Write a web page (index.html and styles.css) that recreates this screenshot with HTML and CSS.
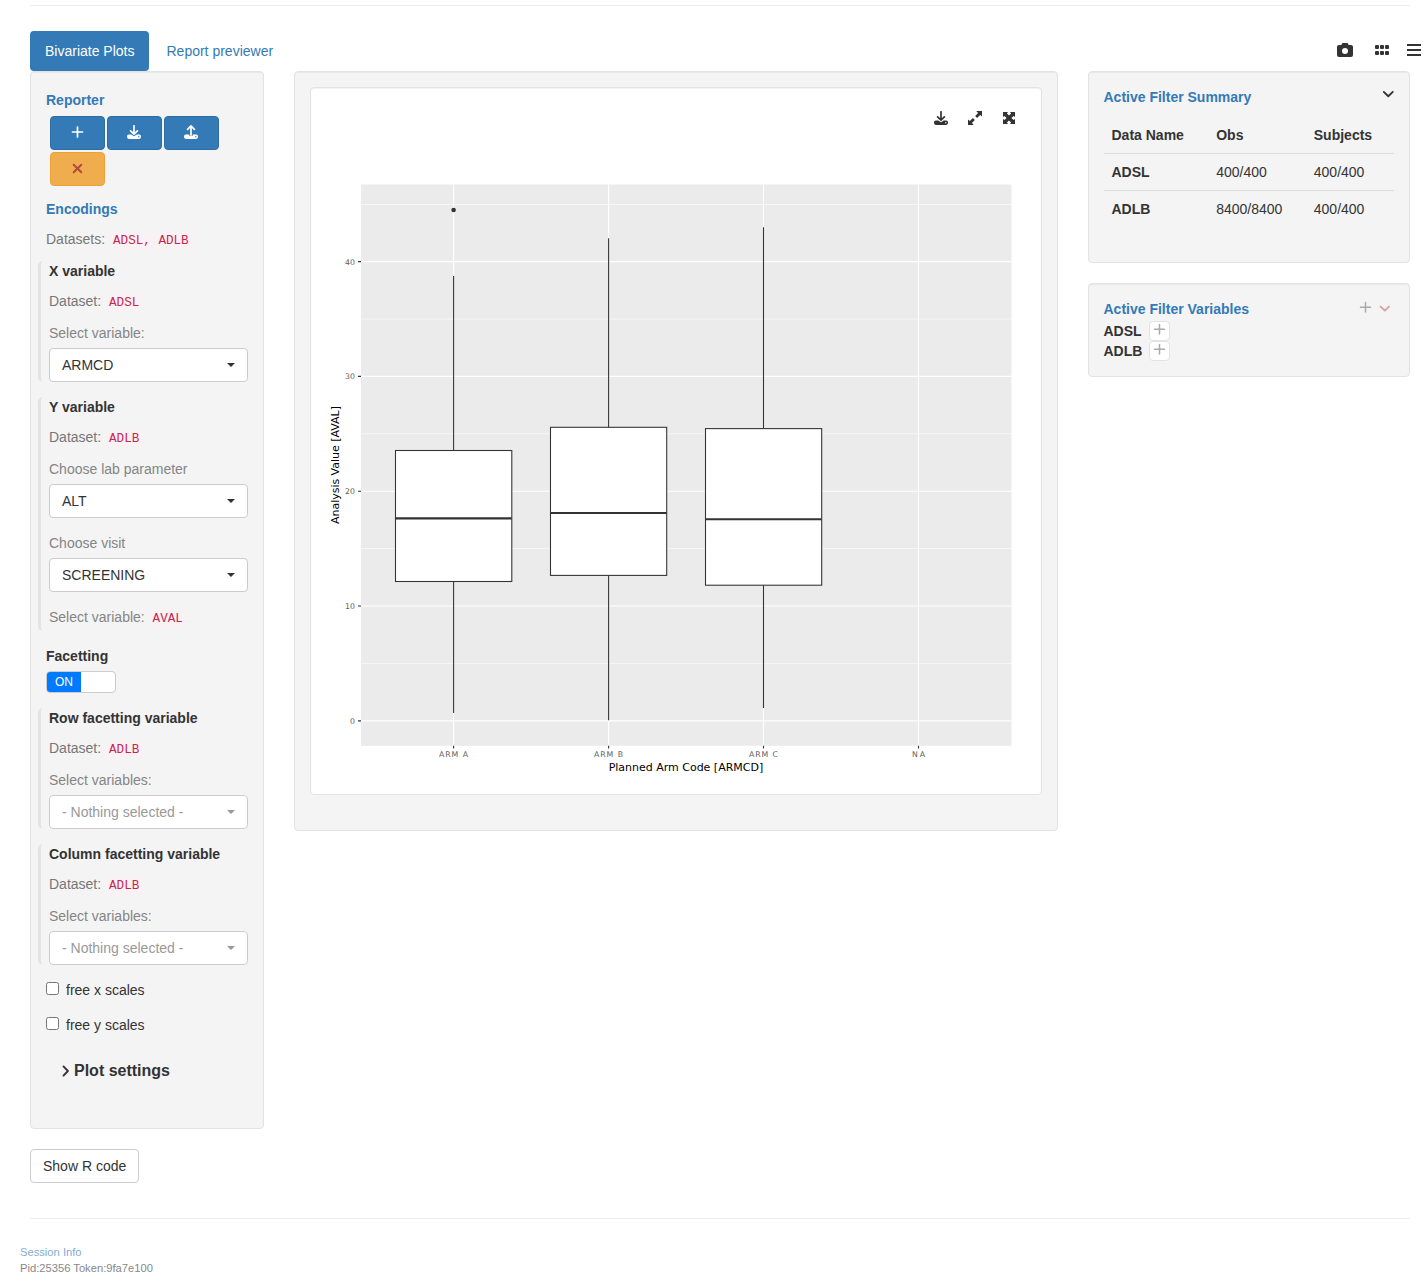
FILE: index.html
```html
<!DOCTYPE html>
<html lang="en">
<head>
<meta charset="utf-8">
<title>Bivariate Plots</title>
<link rel="stylesheet" href="styles.css">
</head>
<body>
<svg class="defs" width="0" height="0" aria-hidden="true">
  <symbol id="plus" viewBox="0 0 14 14"><path d="M7.500 2v10M2.500 7h10" fill="none" stroke="currentColor" stroke-width="1.700" stroke-linecap="round"/></symbol>
  <symbol id="plus-thin" viewBox="0 0 14 14"><path d="M6.500 1.500v9.500M1.500 6.200h10" fill="none" stroke="currentColor" stroke-width="1.500" stroke-linecap="round"/></symbol>
  <symbol id="times" viewBox="0 0 14 14"><path d="M2.700 2.700l7.600 7.600M10.300 2.700l-7.600 7.600" fill="none" stroke="currentColor" stroke-width="2" stroke-linecap="round"/></symbol>
  <symbol id="download" viewBox="0 0 14 14"><path d="M7 .8v8M3.600 5.800L7 9.200l3.400-3.400" fill="none" stroke="currentColor" stroke-width="1.700" stroke-linecap="round" stroke-linejoin="round"/><path fill="currentColor" fill-rule="evenodd" d="M1.800 9.400h2.400L7 11.200l2.800-1.800h2.400A1.800 1.800 0 0 1 14 11.200v.9a1.800 1.800 0 0 1-1.800 1.800H1.800A1.800 1.800 0 0 1 0 12.100v-.9a1.800 1.800 0 0 1 1.800-1.800zM11.800 11a.7.7 0 1 0 0 1.400a.7.7 0 0 0 0-1.400z"/></symbol>
  <symbol id="upload" viewBox="0 0 14 14"><path d="M7 10V1.200M3.600 4.300L7 .9l3.400 3.400" fill="none" stroke="currentColor" stroke-width="1.700" stroke-linecap="round" stroke-linejoin="round"/><path fill="currentColor" fill-rule="evenodd" d="M1.800 9.400h3.400v1.300h3.600V9.400h3.400A1.800 1.800 0 0 1 14 11.200v.9a1.800 1.800 0 0 1-1.800 1.800H1.800A1.800 1.800 0 0 1 0 12.100v-.9a1.800 1.800 0 0 1 1.800-1.800zM11.800 11a.7.7 0 1 0 0 1.400a.7.7 0 0 0 0-1.400z"/></symbol>
  <symbol id="chevron-down" viewBox="0 0 14 14"><path d="M2.800 4.900L7.300 9.200l4.500-4.300" fill="none" stroke="currentColor" stroke-width="1.900" stroke-linecap="round" stroke-linejoin="round"/></symbol>
  <symbol id="chevron-right" viewBox="0 0 8 14"><path d="M1.500 2.400L5.900 7l-4.400 4.600" fill="none" stroke="currentColor" stroke-width="1.900" stroke-linecap="round" stroke-linejoin="round"/></symbol>
  <symbol id="camera" viewBox="0 0 16 14"><path fill="currentColor" fill-rule="evenodd" d="M5.800 0h4.400a1 1 0 0 1 .95.700L11.600 2H14a2 2 0 0 1 2 2v8a2 2 0 0 1-2 2H2a2 2 0 0 1-2-2V4a2 2 0 0 1 2-2h2.400L4.850.7A1 1 0 0 1 5.800 0zM8 5a3 3 0 1 0 0 6a3 3 0 0 0 0-6z"/></symbol>
  <symbol id="grid" viewBox="0 0 14 10"><g fill="currentColor"><rect width="4" height="4" rx="1.100"/><rect x="5" width="4" height="4" rx="1.100"/><rect x="10" width="4" height="4" rx="1.100"/><rect y="6" width="4" height="4" rx="1.100"/><rect x="5" y="6" width="4" height="4" rx="1.100"/><rect x="10" y="6" width="4" height="4" rx="1.100"/></g></symbol>
  <symbol id="bars" viewBox="0 0 14 12"><path fill="currentColor" d="M0 0h14v2H0zM0 5h14v2H0zM0 10h14v2H0z"/></symbol>
  <symbol id="expand" viewBox="0 0 14 14"><path fill="currentColor" d="M8.200 0H14v5.600l-1.900-1.700-2.500 2.500a.7.7 0 0 1-1 0l-1-1a.7.7 0 0 1 0-1l2.500-2.500zM5.800 14H0V8.400l1.900 1.700 2.500-2.500a.7.7 0 0 1 1 0l1 1a.7.7 0 0 1 0 1l-2.500 2.500z"/></symbol>
  <symbol id="fullscreen" viewBox="0 0 12 12"><path fill="currentColor" d="M0 0h5L3.900 1.500 6 3.600l2.100-2.100L7 0h5v5l-1.500-1.100L8.400 6l2.100 2.100L12 7v5H7l1.100-1.500L6 8.400l-2.100 2.100L5 12H0V7l1.500 1.100L3.600 6 1.500 3.900 0 5z"/></symbol>
</svg>

<div class="page">
  <hr class="rule rule-top">
  <nav class="tabs">
    <a class="tab active">Bivariate Plots</a>
    <a class="tab">Report previewer</a>
    <div class="tools">
      <svg width="16" height="14"><use href="#camera"/></svg>
      <svg class="grid-icon" width="14" height="10"><use href="#grid"/></svg>
      <svg class="bars-icon" width="14" height="12"><use href="#bars"/></svg>
    </div>
  </nav>

  <div class="columns">
    <aside class="well encodings">
      <h4 class="label">Reporter</h4>
      <div class="reporter">
        <button class="rbtn"><svg width="14" height="14"><use href="#plus"/></svg></button>
        <button class="rbtn"><svg width="14" height="14"><use href="#download"/></svg></button>
        <button class="rbtn"><svg width="14" height="14"><use href="#upload"/></svg></button>
        <button class="rbtn warn"><svg width="14" height="14"><use href="#times"/></svg></button>
      </div>
      <h4 class="label">Encodings</h4>
      <div class="datasets">Datasets: <code>ADSL, ADLB</code></div>

      <section class="group">
        <strong>X variable</strong>
        <div class="dataset">Dataset: <code>ADSL</code></div>
        <label>Select variable:</label>
        <div class="select">ARMCD<i class="caret"></i></div>
      </section>

      <section class="group">
        <strong>Y variable</strong>
        <div class="dataset">Dataset: <code>ADLB</code></div>
        <label>Choose lab parameter</label>
        <div class="select">ALT<i class="caret"></i></div>
        <label class="next">Choose visit</label>
        <div class="select">SCREENING<i class="caret"></i></div>
        <label class="fixed">Select variable: <code>AVAL</code></label>
      </section>

      <strong class="facetting">Facetting</strong>
      <div class="switch"><span>ON</span></div>

      <section class="group">
        <strong>Row facetting variable</strong>
        <div class="dataset">Dataset: <code>ADLB</code></div>
        <label>Select variables:</label>
        <div class="select empty">- Nothing selected -<i class="caret"></i></div>
      </section>

      <section class="group">
        <strong>Column facetting variable</strong>
        <div class="dataset">Dataset: <code>ADLB</code></div>
        <label>Select variables:</label>
        <div class="select empty">- Nothing selected -<i class="caret"></i></div>
      </section>

      <label class="check"><input type="checkbox">free x scales</label>
      <label class="check"><input type="checkbox">free y scales</label>
      <div class="settings"><svg width="8" height="14"><use href="#chevron-right"/></svg>Plot settings</div>
    </aside>

    <main class="well output">
      <div class="card">
        <div class="card-tools">
          <svg width="14" height="14"><use href="#download"/></svg>
          <svg width="14" height="14"><use href="#expand"/></svg>
          <svg class="full-icon" width="12" height="12"><use href="#fullscreen"/></svg>
        </div>
        <svg class="plot" width="730" height="654" viewBox="311 140 730 654">
          <rect x="361" y="184.500" width="650.500" height="561.300" fill="#ebebeb"/>
          <g stroke="#fff" stroke-width=".55">
            <path d="M361 204.500h650.500M361 319h650.500M361 433.700h650.500M361 548.500h650.500M361 663.400h650.500"/>
          </g>
          <g stroke="#fff" stroke-width="1.100">
            <path d="M361 261.600h650.500M361 376.400h650.500M361 491.200h650.500M361 606h650.500M361 720.900h650.500"/>
            <path d="M453.600 184.500v561.300M608.600 184.500v561.300M763.500 184.500v561.300M918.500 184.500v561.300"/>
          </g>
          <g stroke="#333" stroke-width="1.070" fill="#fff">
            <path d="M453.600 276v174.500M453.600 581.500V713M608.600 238.300v189M608.600 575.300V720.300M763.500 227.200v201.500M763.500 585.300V708"/>
            <rect x="395.500" y="450.500" width="116.300" height="131"/>
            <rect x="550.500" y="427.300" width="116.200" height="148.100"/>
            <rect x="705.500" y="428.600" width="116.200" height="156.600"/>
            <path stroke-width="2.130" d="M395.500 518.400h116.300M550.500 513h116.200M705.500 519.300h116.200"/>
          </g>
          <circle cx="453.600" cy="210" r="2.300" fill="#333"/>
          <g stroke="#333" stroke-width="1.100">
            <path d="M358 261.600h3M358 376.400h3M358 491.200h3M358 606h3M358 720.900h3M453.600 745.800v2.700M608.600 745.800v2.700M763.500 745.800v2.700M918.500 745.800v2.700"/>
          </g>
          <g class="ticks">
            <text x="345" y="264.900" textLength="10">40</text>
            <text x="345" y="379.300" textLength="10">30</text>
            <text x="345" y="494.100" textLength="10">20</text>
            <text x="345" y="609" textLength="10">10</text>
            <text x="350" y="724">0</text>
            <text x="439" y="757" textLength="29">ARM A</text>
            <text x="594" y="757" textLength="29">ARM B</text>
            <text x="749" y="757" textLength="29">ARM C</text>
            <text x="912" y="757" textLength="13">NA</text>
          </g>
          <text class="axis" x="608.700" y="771" textLength="154.500">Planned Arm Code [ARMCD]</text>
          <text class="axis" transform="translate(339 524) rotate(-90)" textLength="118">Analysis Value [AVAL]</text>
        </svg>
      </div>
    </main>

    <aside class="filters">
      <section class="well summary">
        <header><h4 class="label">Active Filter Summary</h4><svg width="14" height="14"><use href="#chevron-down"/></svg></header>
        <table>
          <thead><tr><th class="c1">Data Name</th><th class="c2">Obs</th><th>Subjects</th></tr></thead>
          <tbody>
            <tr><th>ADSL</th><td>400/400</td><td>400/400</td></tr>
            <tr><th>ADLB</th><td>8400/8400</td><td>400/400</td></tr>
          </tbody>
        </table>
      </section>
      <section class="well variables">
        <header><h4 class="label">Active Filter Variables</h4>
          <div class="actions"><svg width="14" height="14"><use href="#plus-thin"/></svg><svg class="collapse" width="13" height="13"><use href="#chevron-down"/></svg></div>
        </header>
        <div class="frow"><strong>ADSL</strong><span class="add"><svg width="14" height="14"><use href="#plus-thin"/></svg></span></div>
        <div class="frow"><strong>ADLB</strong><span class="add"><svg width="14" height="14"><use href="#plus-thin"/></svg></span></div>
      </section>
    </aside>
  </div>

  <button class="rcode">Show R code</button>
  <hr class="rule rule-bottom">
  <footer><a>Session Info</a><div>Pid:25356 Token:9fa7e100</div></footer>
</div>
</body>
</html>
```
FILE: styles.css
```css
* { box-sizing: border-box; }
html { overflow: hidden; }
body { margin: 0; font: 14px/20px "Liberation Sans", Arial, sans-serif; color: #333; background: #fff; }
svg { display: block; flex: none; }
.defs { display: none; }
.page { height: 1281px; padding: 5px 15px 0 30px; overflow: hidden; }
.rule { height: 1px; margin: 0; border: 0; background: #eee; }
.rule-top { margin-bottom: 25px; }

.tabs { display: flex; gap: 2px; height: 40px; margin-right: -15px; }
.tab { padding: 10px 15px; border-radius: 4px; color: #337ab7; }
.tab.active { background: #337ab7; color: #fff; }
.tools { display: flex; align-items: center; margin: 0 4px 2px auto; }
.grid-icon { margin-left: 22px; }
.bars-icon { margin-left: 18px; }

.columns { display: grid; grid-template-columns: 234px 764px 322px; gap: 30px; align-items: start; }
.well { border: 1px solid #e3e3e3; border-radius: 4px; background: #f4f4f4; box-shadow: inset 0 1px 1px rgba(0, 0, 0, .05); }
.label { margin: 0; font-size: 14px; line-height: 20px; font-weight: bold; color: #337ab7; }
strong { display: block; line-height: 20px; }
code { padding: 2px 4px; border-radius: 4px; background: #f9f2f4; color: #c7254e; font: 12.6px "Liberation Mono", monospace; }

.encodings { height: 1058px; padding: 18px 15px 0; }
.reporter { display: flex; flex-wrap: wrap; gap: 2px; margin: 6px 0 13px 4px; }
.rbtn { display: flex; align-items: center; justify-content: center; width: 55px; height: 34px; padding: 0 1px 2px 0; border: 1px solid #2e6da4; border-radius: 4px; background: #337ab7; color: #fff; }
.rbtn.warn { border-color: #eea236; background: #f0ad4e; color: #b5483f; padding: 0; }
.datasets { margin-top: 10px; height: 20px; color: #777; }
.group { margin: 0 0 15px -8px; padding-left: 8px; border-left: 3px solid #e3e3e3; border-radius: 5px; }
.datasets + .group { margin-top: 12px; }
.dataset { height: 20px; margin: 10px 0 12px; color: #777; }
.group label { display: block; height: 20px; margin-bottom: 5px; color: #858585; }
.group .next { margin-top: 15px; }
.group .fixed { height: 24px; margin: 15px 0 0; }
.select { display: flex; align-items: center; justify-content: space-between; height: 34px; padding: 0 12px; border: 1px solid #ccc; border-radius: 4px; background: #fff; }
.empty { color: #999; }
.caret { border-top: 4px solid; border-left: 4px solid transparent; border-right: 4px solid transparent; }
.switch { width: 70px; height: 22px; margin: 5px 0 15px; border: 1px solid #ccc; border-radius: 4px; background: #fff; overflow: hidden; }
.switch span { display: block; width: 34px; height: 20px; background: #007bff; color: #fff; font-size: 12px; text-align: center; }
.check { display: flex; align-items: flex-start; height: 20px; margin-bottom: 15px; }
.check input { width: 13px; height: 13px; margin: 2px 7px 0 0; }
.settings { display: flex; align-items: center; gap: 4px; margin: 26px 0 0 16px; font-size: 16px; font-weight: bold; }

.output { height: 760px; padding: 15px; }
.card { height: 708px; border: 1px solid #e3e3e3; border-radius: 4px; background: #fff; box-shadow: inset 0 1px 1px rgba(0, 0, 0, .05); }
.card-tools { display: flex; justify-content: flex-end; align-items: center; gap: 20px; height: 52px; padding: 8px 26px 0 0; }
.full-icon { margin-left: 1px; }
.ticks { font: 7.8px "DejaVu Sans", sans-serif; fill: #606060; }
.axis { font: 11px "DejaVu Sans", sans-serif; fill: #000; }

.filters { display: flex; flex-direction: column; gap: 20px; }
.summary { height: 192px; padding: 15px 15px 0 14.500px; }
.summary header { display: flex; justify-content: space-between; }
.summary header svg { margin-right: -1px; }
table { width: 100%; margin-top: 10px; border-collapse: collapse; table-layout: fixed; }
th, td { height: 37px; padding: 0 8px; text-align: left; }
thead th { height: 36px; }
tbody tr { border-top: 1px solid #ddd; }
.c1 { width: 104.700px; }
.c2 { width: 97.600px; }
.variables { height: 94px; padding: 15px 15px 0 14.500px; }
.variables header { display: flex; justify-content: space-between; height: 22px; }
.actions { display: flex; gap: 5px; margin: 2px 3px 0 0; color: #aaa; }
.collapse { margin-top: 1px; color: #d6a0a0; }
.frow { display: flex; height: 20px; }
.frow strong { width: 45.500px; }
.add { display: flex; justify-content: center; width: 21px; height: 20px; padding: 1px 0 0 1px; border: 1px solid #e3e3e3; border-radius: 4px; background: #fff; color: #aaa; }

.rcode { display: block; height: 34px; margin: 20px 0 35px; padding: 0 12px; border: 1px solid #ccc; border-radius: 4px; background: #fff; color: #333; font: inherit; }
footer { margin: 25px 0 0 -10px; font-size: 11.200px; line-height: 16px; color: #888; }
footer a { display: block; color: #84add2; }
```
